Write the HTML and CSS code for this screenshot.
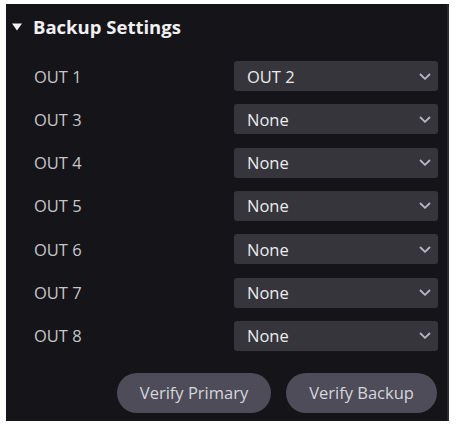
FILE: index.html
```html
<!DOCTYPE html>
<html>
<head>
<meta charset="utf-8">
<link rel="stylesheet" href="styles.css">
</head>
<body>
<div class="panel">
  <div class="header">
    <svg class="caret" width="10" height="8" viewBox="0 0 10 8"><path d="M0 0.5 L10 0.5 L5 7.5 Z" fill="#f2f2f4"/></svg>
    <span class="title">Backup Settings</span>
  </div>
  <div class="rows">
    <div class="row"><span class="label">OUT 1</span><div class="select"><span class="value">OUT 2</span><svg class="chev" width="12" height="7" viewBox="0 0 12 7"><path d="M1 1 L6 5.8 L11 1" fill="none" stroke="#b8b8c0" stroke-width="1.8"/></svg></div></div>
    <div class="row"><span class="label">OUT 3</span><div class="select"><span class="value">None</span><svg class="chev" width="12" height="7" viewBox="0 0 12 7"><path d="M1 1 L6 5.8 L11 1" fill="none" stroke="#b8b8c0" stroke-width="1.8"/></svg></div></div>
    <div class="row"><span class="label">OUT 4</span><div class="select"><span class="value">None</span><svg class="chev" width="12" height="7" viewBox="0 0 12 7"><path d="M1 1 L6 5.8 L11 1" fill="none" stroke="#b8b8c0" stroke-width="1.8"/></svg></div></div>
    <div class="row"><span class="label">OUT 5</span><div class="select"><span class="value">None</span><svg class="chev" width="12" height="7" viewBox="0 0 12 7"><path d="M1 1 L6 5.8 L11 1" fill="none" stroke="#b8b8c0" stroke-width="1.8"/></svg></div></div>
    <div class="row"><span class="label">OUT 6</span><div class="select"><span class="value">None</span><svg class="chev" width="12" height="7" viewBox="0 0 12 7"><path d="M1 1 L6 5.8 L11 1" fill="none" stroke="#b8b8c0" stroke-width="1.8"/></svg></div></div>
    <div class="row"><span class="label">OUT 7</span><div class="select"><span class="value">None</span><svg class="chev" width="12" height="7" viewBox="0 0 12 7"><path d="M1 1 L6 5.8 L11 1" fill="none" stroke="#b8b8c0" stroke-width="1.8"/></svg></div></div>
    <div class="row"><span class="label">OUT 8</span><div class="select"><span class="value">None</span><svg class="chev" width="12" height="7" viewBox="0 0 12 7"><path d="M1 1 L6 5.8 L11 1" fill="none" stroke="#b8b8c0" stroke-width="1.8"/></svg></div></div>
  </div>
  <div class="actions">
    <button class="btn btn-primary">Verify Primary</button>
    <button class="btn btn-backup">Verify Backup</button>
  </div>
</div>
</body>
</html>
```
FILE: styles.css
```css
html, body {
  margin: 0;
  padding: 0;
  background: #ffffff;
}
body {
  width: 457px;
  height: 426px;
  font-family: "Open Sans", "Noto Sans", sans-serif;
}
.panel {
  margin: 4px 0 0 6px;
  width: 443px;
  height: 417px;
  box-sizing: border-box;
  background: #151418;
  border-right: 2px solid #2a2a2e;
  padding-top: 11px;
}
.header {
  display: flex;
  align-items: center;
  height: 24px;
  padding-left: 6px;
}
.caret {
  display: block;
  margin-right: 11px;
}
.title {
  color: #f0f0f2;
  font-weight: 700;
  font-size: 18.5px;
  line-height: 24px;
}
.rows {
  display: flex;
  flex-direction: column;
  gap: 13.33px;
  margin-top: 22px;
  padding-left: 28px;
  padding-right: 9px;
}
.row {
  display: flex;
  align-items: center;
  justify-content: space-between;
  height: 30px;
}
.label {
  color: #c6c6ca;
  font-size: 16.5px;
  font-weight: 500;
}
.select {
  width: 204px;
  height: 30px;
  box-sizing: border-box;
  background: #35353b;
  border-radius: 3px;
  display: flex;
  align-items: center;
  justify-content: space-between;
  padding: 0 7px 0 13px;
}
.value {
  color: #ececee;
  font-size: 16.5px;
  font-weight: 500;
}
.chev {
  display: block;
}
.actions {
  display: flex;
  justify-content: flex-end;
  gap: 15px;
  margin-top: 22px;
  padding-right: 10px;
}
.btn {
  height: 40px;
  border: none;
  border-radius: 20px;
  background: #4d4c58;
  color: #d6d6dc;
  font-family: "Open Sans", "Noto Sans", sans-serif;
  font-size: 16.5px;
  font-weight: 500;
  padding: 0;
}
.btn-primary {
  width: 154px;
}
.btn-backup {
  width: 151px;
}
```
